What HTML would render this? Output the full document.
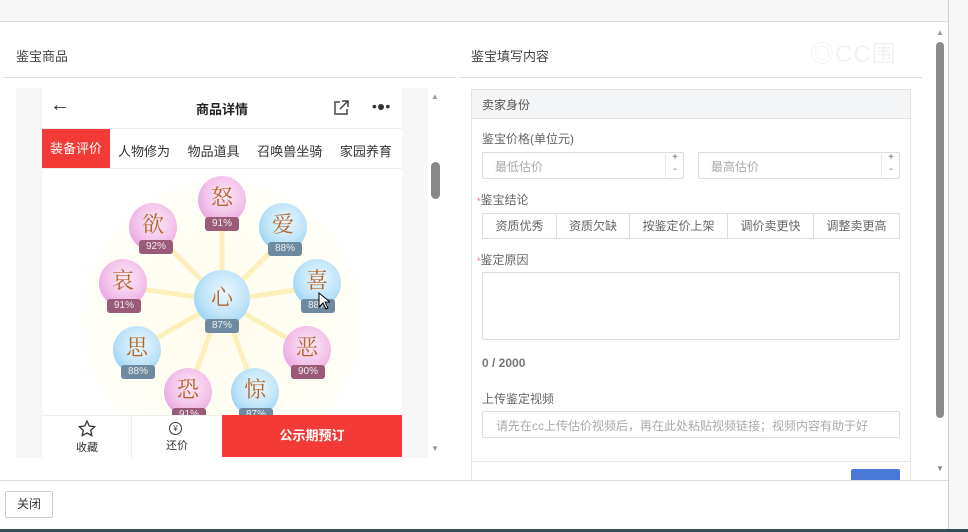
<!DOCTYPE html>
<html><head><meta charset="utf-8"><style>
*{box-sizing:border-box;margin:0;padding:0}
body{width:968px;height:532px;overflow:hidden;background:#fff;font-family:"Liberation Sans","Noto Sans CJK SC",sans-serif;position:relative;color:#333}
.a{position:absolute}
.t{font-size:13px;color:#444}
.ball{position:absolute;border-radius:50%;text-align:center;color:#b4662a;font-family:"Noto Serif CJK SC","Noto Sans CJK SC",serif;font-size:22px}
.pink{background:radial-gradient(circle at 55% 40%,#fbe8f6 0%,#f3c2ea 50%,#e08ad6 100%)}
.blue{background:radial-gradient(circle at 55% 40%,#eaf7ff 0%,#bfe4f8 50%,#7cc3ee 100%)}
.bd{position:absolute;width:34px;height:14px;border-radius:3px;font-size:10px;color:#eee;text-align:center;line-height:14px;font-family:"Liberation Sans",sans-serif}
.bp{background:#9a5a78}.bb{background:#6e8aa0}
.ray{position:absolute;left:222px;top:298px;height:5px;background:#fcefbb;transform-origin:0 50%}
.inp{position:absolute;border:1px solid #ddd;border-radius:2px;font-size:12px;color:#aaa}
.seg{position:absolute;top:213px;height:26px;border:1px solid #ddd;font-size:12px;color:#666;text-align:center;line-height:24px}
</style></head><body>
<div class="a" style="left:0;top:0;width:968px;height:22px;background:#f7f7f7;border-bottom:1px solid #ddd"></div>
<div class="a" style="left:948px;top:0;width:20px;height:532px;background:#f7f7f7;border-left:1px solid #ccc"></div>
<div class="a t" style="left:16px;top:46px">鉴宝商品</div>
<div class="a" style="left:4px;top:77px;width:452px;height:1px;background:#ddd"></div>
<div class="a t" style="left:471px;top:46px">鉴宝填写内容</div>
<div class="a" style="left:460px;top:77px;width:462px;height:1px;background:#ddd"></div>
<div class="a" style="left:810px;top:34px;width:130px;height:34px;color:#f2f2f2;font-size:24px;letter-spacing:1px">◎CC围</div>
<div class="a" style="left:936px;top:42px;width:8px;height:376px;background:#8a8a8a;border-radius:4px"></div>
<div class="a" style="left:936px;top:28px;color:#999;font-size:8px">▲</div>
<div class="a" style="left:936px;top:464px;color:#888;font-size:8px">▼</div>
<div class="a" style="left:16px;top:88px;width:412px;height:370px;background:#f6f6f6"></div>
<div class="a" style="left:42px;top:88px;width:360px;height:370px;background:#fff;overflow:hidden">
 <div class="a" style="left:8px;top:6px;font-size:20px;color:#333">←</div>
 <div class="a" style="left:0;width:360px;top:11px;text-align:center;font-size:13px;font-weight:bold;color:#222">商品详情</div>
 <svg class="a" style="left:290px;top:11px" width="18" height="18" viewBox="0 0 18 18"><path d="M8 3H3v12h12v-5M10 2h6v6M16 2L8 10" fill="none" stroke="#444" stroke-width="1.5"/></svg>
 <div class="a" style="left:330px;top:10px;font-size:14px;color:#333">•●•</div>
 <div class="a" style="left:0;top:40px;width:360px;height:1px;background:#eee"></div>
 <div class="a" style="left:0;top:41px;width:68px;height:39px;background:#f43a36;color:#fff;font-size:13px;text-align:center;line-height:39px">装备评价</div>
 <div class="a" style="left:76px;top:53px;font-size:13px;color:#333;word-spacing:14px;white-space:nowrap">人物修为 物品道具 召唤兽坐骑 家园养育</div>
 <div class="a" style="left:0;top:80px;width:360px;height:1px;background:#eee"></div>
 <div class="a" style="left:40px;top:92px;width:280px;height:280px;border-radius:50%;background:radial-gradient(circle,#fffcec 0%,#fffef6 60%,#fff 100%)"></div>
</div>
<div class="a" style="left:0;top:0;width:968px;height:415px;overflow:hidden;pointer-events:none">
<div class="ray" style="width:90px;transform:rotate(-90deg)"></div>
<div class="ray" style="width:90px;transform:rotate(-45deg)"></div>
<div class="ray" style="width:95px;transform:rotate(-8deg)"></div>
<div class="ray" style="width:95px;transform:rotate(30deg)"></div>
<div class="ray" style="width:95px;transform:rotate(70deg)"></div>
<div class="ray" style="width:95px;transform:rotate(110deg)"></div>
<div class="ray" style="width:95px;transform:rotate(150deg)"></div>
<div class="ray" style="width:95px;transform:rotate(188deg)"></div>
<div class="ray" style="width:90px;transform:rotate(225deg)"></div>
<div class="ball blue" style="left:194px;top:270px;width:56px;height:56px;line-height:54px">心</div><div class="bd bb" style="left:205px;top:319px">87%</div>
<div class="ball pink" style="left:198px;top:176px;width:48px;height:48px;line-height:42px">怒</div><div class="bd bp" style="left:205px;top:217px">91%</div>
<div class="ball pink" style="left:129px;top:203px;width:48px;height:48px;line-height:42px">欲</div><div class="bd bp" style="left:139px;top:240px">92%</div>
<div class="ball blue" style="left:259px;top:203px;width:48px;height:48px;line-height:42px">爱</div><div class="bd bb" style="left:268px;top:242px">88%</div>
<div class="ball pink" style="left:99px;top:259px;width:48px;height:48px;line-height:42px">哀</div><div class="bd bp" style="left:107px;top:299px">91%</div>
<div class="ball blue" style="left:293px;top:259px;width:48px;height:48px;line-height:42px">喜</div><div class="bd bb" style="left:301px;top:299px">88%</div>
<div class="ball blue" style="left:113px;top:326px;width:48px;height:48px;line-height:42px">思</div><div class="bd bb" style="left:121px;top:365px">88%</div>
<div class="ball pink" style="left:283px;top:326px;width:48px;height:48px;line-height:42px">恶</div><div class="bd bp" style="left:291px;top:365px">90%</div>
<div class="ball pink" style="left:164px;top:368px;width:48px;height:48px;line-height:42px">恐</div><div class="bd bp" style="left:172px;top:408px">91%</div>
<div class="ball blue" style="left:231px;top:368px;width:48px;height:48px;line-height:42px">惊</div><div class="bd bb" style="left:239px;top:408px">87%</div>
<svg class="a" style="left:318px;top:292px" width="12" height="18" viewBox="0 0 12 18"><path d="M1 1v14l4-4 3 6 2-1-3-6h5z" fill="#fff" stroke="#000"/></svg>
</div>
<div class="a" style="left:42px;top:415px;width:360px;height:43px;background:#fff;border-top:1px solid #eee"></div>
<div class="a" style="left:131px;top:416px;width:1px;height:42px;background:#eee"></div>
<svg class="a" style="left:78px;top:420px" width="18" height="17" viewBox="0 0 18 17"><path d="M9 1l2.3 5 5.4.6-4 3.7 1.1 5.3L9 13l-4.8 2.6 1.1-5.3-4-3.7 5.4-.6z" fill="none" stroke="#333" stroke-width="1.3"/></svg>
<div class="a" style="left:76px;top:439px;font-size:11px;color:#333">收藏</div>
<div class="a" style="left:169px;top:422px;width:13px;height:13px;border:1.3px solid #333;border-radius:50%;font-size:8px;text-align:center;line-height:11px">¥</div>
<div class="a" style="left:166px;top:437px;font-size:11px;color:#333">还价</div>
<div class="a" style="left:222px;top:415px;width:180px;height:42px;background:#f43a36;color:#fff;font-size:13px;font-weight:bold;text-align:center;line-height:42px">公示期预订</div>
<div class="a" style="left:431px;top:162px;width:9px;height:37px;background:#888;border-radius:5px"></div>
<div class="a" style="left:431px;top:92px;color:#999;font-size:8px">▲</div>
<div class="a" style="left:431px;top:444px;color:#999;font-size:8px">▼</div>
<div class="a" style="left:471px;top:89px;width:440px;height:400px;border:1px solid #e2e2e2"></div>
<div class="a" style="left:472px;top:90px;width:438px;height:29px;background:#f4f5f7;border-bottom:1px solid #e2e2e2;font-size:12px;color:#555;padding:6px 10px">卖家身份</div>
<div class="a" style="left:482px;top:130px;font-size:12px;color:#666">鉴宝价格(单位元)</div>
<div class="inp" style="left:482px;top:152px;width:202px;height:27px;padding:5px 12px">最低估价</div>
<div class="a" style="left:665px;top:152px;width:19px;height:27px;border-left:1px solid #eee;font-size:10px;color:#666;text-align:center;line-height:12px">+<br>-</div>
<div class="inp" style="left:698px;top:152px;width:202px;height:27px;padding:5px 12px">最高估价</div>
<div class="a" style="left:881px;top:152px;width:19px;height:27px;border-left:1px solid #eee;font-size:10px;color:#666;text-align:center;line-height:12px">+<br>-</div>
<div class="a" style="left:477px;top:191px;font-size:12px;color:#666"><span style="color:#e66;font-size:9px">*</span>鉴宝结论</div>
<div class="seg" style="left:482px;width:75px">资质优秀</div>
<div class="seg" style="left:556px;width:74px">资质欠缺</div>
<div class="seg" style="left:629px;width:99px">按鉴定价上架</div>
<div class="seg" style="left:727px;width:87px">调价卖更快</div>
<div class="seg" style="left:813px;width:87px">调整卖更高</div>
<div class="a" style="left:477px;top:251px;font-size:12px;color:#666"><span style="color:#e66;font-size:9px">*</span>鉴定原因</div>
<div class="inp" style="left:482px;top:272px;width:418px;height:68px"></div>
<div class="a" style="left:482px;top:356px;font-size:12px;color:#777;font-weight:bold">0 / 2000</div>
<div class="a" style="left:482px;top:390px;font-size:12px;color:#666">上传鉴定视频</div>
<div class="inp" style="left:482px;top:411px;width:418px;height:27px;padding:5px 13px;white-space:nowrap;overflow:hidden">请先在cc上传估价视频后，再在此处粘贴视频链接；视频内容有助于好</div>
<div class="a" style="left:472px;top:461px;width:438px;height:1px;background:#e8e8e8"></div>
<div class="a" style="left:851px;top:469px;width:49px;height:14px;background:#4a78d8;border-radius:2px 2px 0 0"></div>
<div class="a" style="left:0;top:480px;width:948px;height:50px;background:#fff;border-top:1px solid #ddd"></div>
<div class="a" style="left:5px;top:491px;width:48px;height:27px;border:1px solid #ccc;border-radius:2px;font-size:12px;color:#333;text-align:center;line-height:25px">关闭</div>
<div class="a" style="left:0;top:529px;width:968px;height:3px;background:#2f4f5a"></div>
</body></html>
